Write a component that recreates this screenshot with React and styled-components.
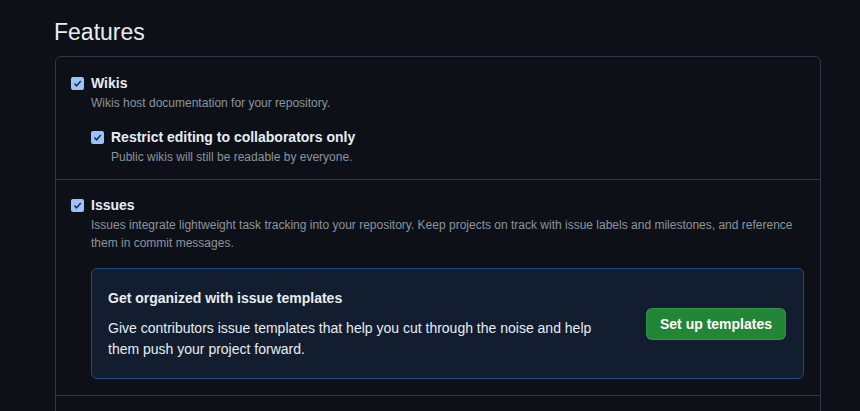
import React from 'react'
import styled, { createGlobalStyle } from 'styled-components'

const GlobalStyle = createGlobalStyle`
  html, body {
    margin: 0;
    background: #0d1117;
  }
  body {
    font-family: "Segoe UI", "Liberation Sans", "Noto Sans", sans-serif;
    color: #e6edf3;
  }
`

const Check = () => (
  <Box>
    <svg width="9" height="9" viewBox="0 0 10 10">
      <path d="M1.6 5.2 L4 7.6 L8.6 2.2" fill="none" stroke="#2b3340" strokeWidth="1.8" />
    </svg>
  </Box>
)

const Option = ({ title, note, children }) => (
  <OptionWrap>
    <Label>
      <Check />
      <Title>{title}</Title>
    </Label>
    {note && <Note>{note}</Note>}
    {children}
  </OptionWrap>
)

const App = () => {
  return (
    <Page>
      <GlobalStyle />
      <Heading>Features</Heading>
      <Panel>
        <Row $bottom={13}>
          <Option title="Wikis" note="Wikis host documentation for your repository.">
            <Nested>
              <Option title="Restrict editing to collaborators only" note="Public wikis will still be readable by everyone." />
            </Nested>
          </Option>
        </Row>
        <Row $top={15} $bottom={16}>
          <Option
            title="Issues"
            note="Issues integrate lightweight task tracking into your repository. Keep projects on track with issue labels and milestones, and reference them in commit messages."
          >
            <Callout>
              <CalloutText>
                <CalloutTitle>Get organized with issue templates</CalloutTitle>
                <CalloutBody>
                  Give contributors issue templates that help you cut through the noise and help them push your project forward.
                </CalloutBody>
              </CalloutText>
              <GreenButton>Set up templates</GreenButton>
            </Callout>
          </Option>
        </Row>
        <Row />
      </Panel>
    </Page>
  )
}

export default App

const Page = styled.div`
  padding: 14px 39px 0 55px;
`

const Heading = styled.h2`
  margin: 0 0 6px -1px;
  font-size: 23px;
  font-weight: 400;
  line-height: 36px;
  color: #e6edf3;
`

const Panel = styled.div`
  border: 1px solid #30363d;
  border-radius: 6px;
`

const Row = styled.div`
  padding: ${props => props.$top || 16}px 16px ${props => props.$bottom || 14}px 15px;
  border-bottom: 1px solid #30363d;
  &:last-child {
    border-bottom: none;
    min-height: 40px;
  }
`

const OptionWrap = styled.div`
  display: flex;
  flex-direction: column;
`

const Label = styled.div`
  display: flex;
  align-items: center;
  gap: 7px;
  height: 20px;
`

const Box = styled.span`
  width: 13px;
  height: 13px;
  border-radius: 2px;
  background: #99c3ff;
  display: flex;
  align-items: center;
  justify-content: center;
  flex-shrink: 0;
`

const Title = styled.span`
  font-size: 14px;
  font-weight: 700;
  color: #e6edf3;
`

const Note = styled.p`
  margin: 1px 0 0 20px;
  font-size: 12px;
  line-height: 18px;
  color: #8b949e;
`

const Nested = styled.div`
  margin: 15px 0 0 20px;
`

const Callout = styled.div`
  margin: 16px 0 0 20px;
  padding: 19px 17px 18px 16px;
  border: 1px solid #1c4c86;
  border-radius: 6px;
  background: #121d2f;
  display: flex;
  align-items: center;
  justify-content: space-between;
  gap: 24px;
`

const CalloutText = styled.div`
  max-width: 500px;
`

const CalloutTitle = styled.h3`
  margin: 0 0 10px;
  font-size: 14px;
  font-weight: 700;
  line-height: 20px;
  color: #e6edf3;
`

const CalloutBody = styled.p`
  margin: 0;
  font-size: 14px;
  line-height: 21px;
  color: #e6edf3;
`

const GreenButton = styled.button`
  height: 32px;
  padding: 0 13px;
  border: 1px solid rgba(240, 246, 252, 0.1);
  border-radius: 6px;
  background: #238636;
  color: #ffffff;
  font-family: inherit;
  font-size: 14px;
  font-weight: 700;
  white-space: nowrap;
  flex-shrink: 0;
`
